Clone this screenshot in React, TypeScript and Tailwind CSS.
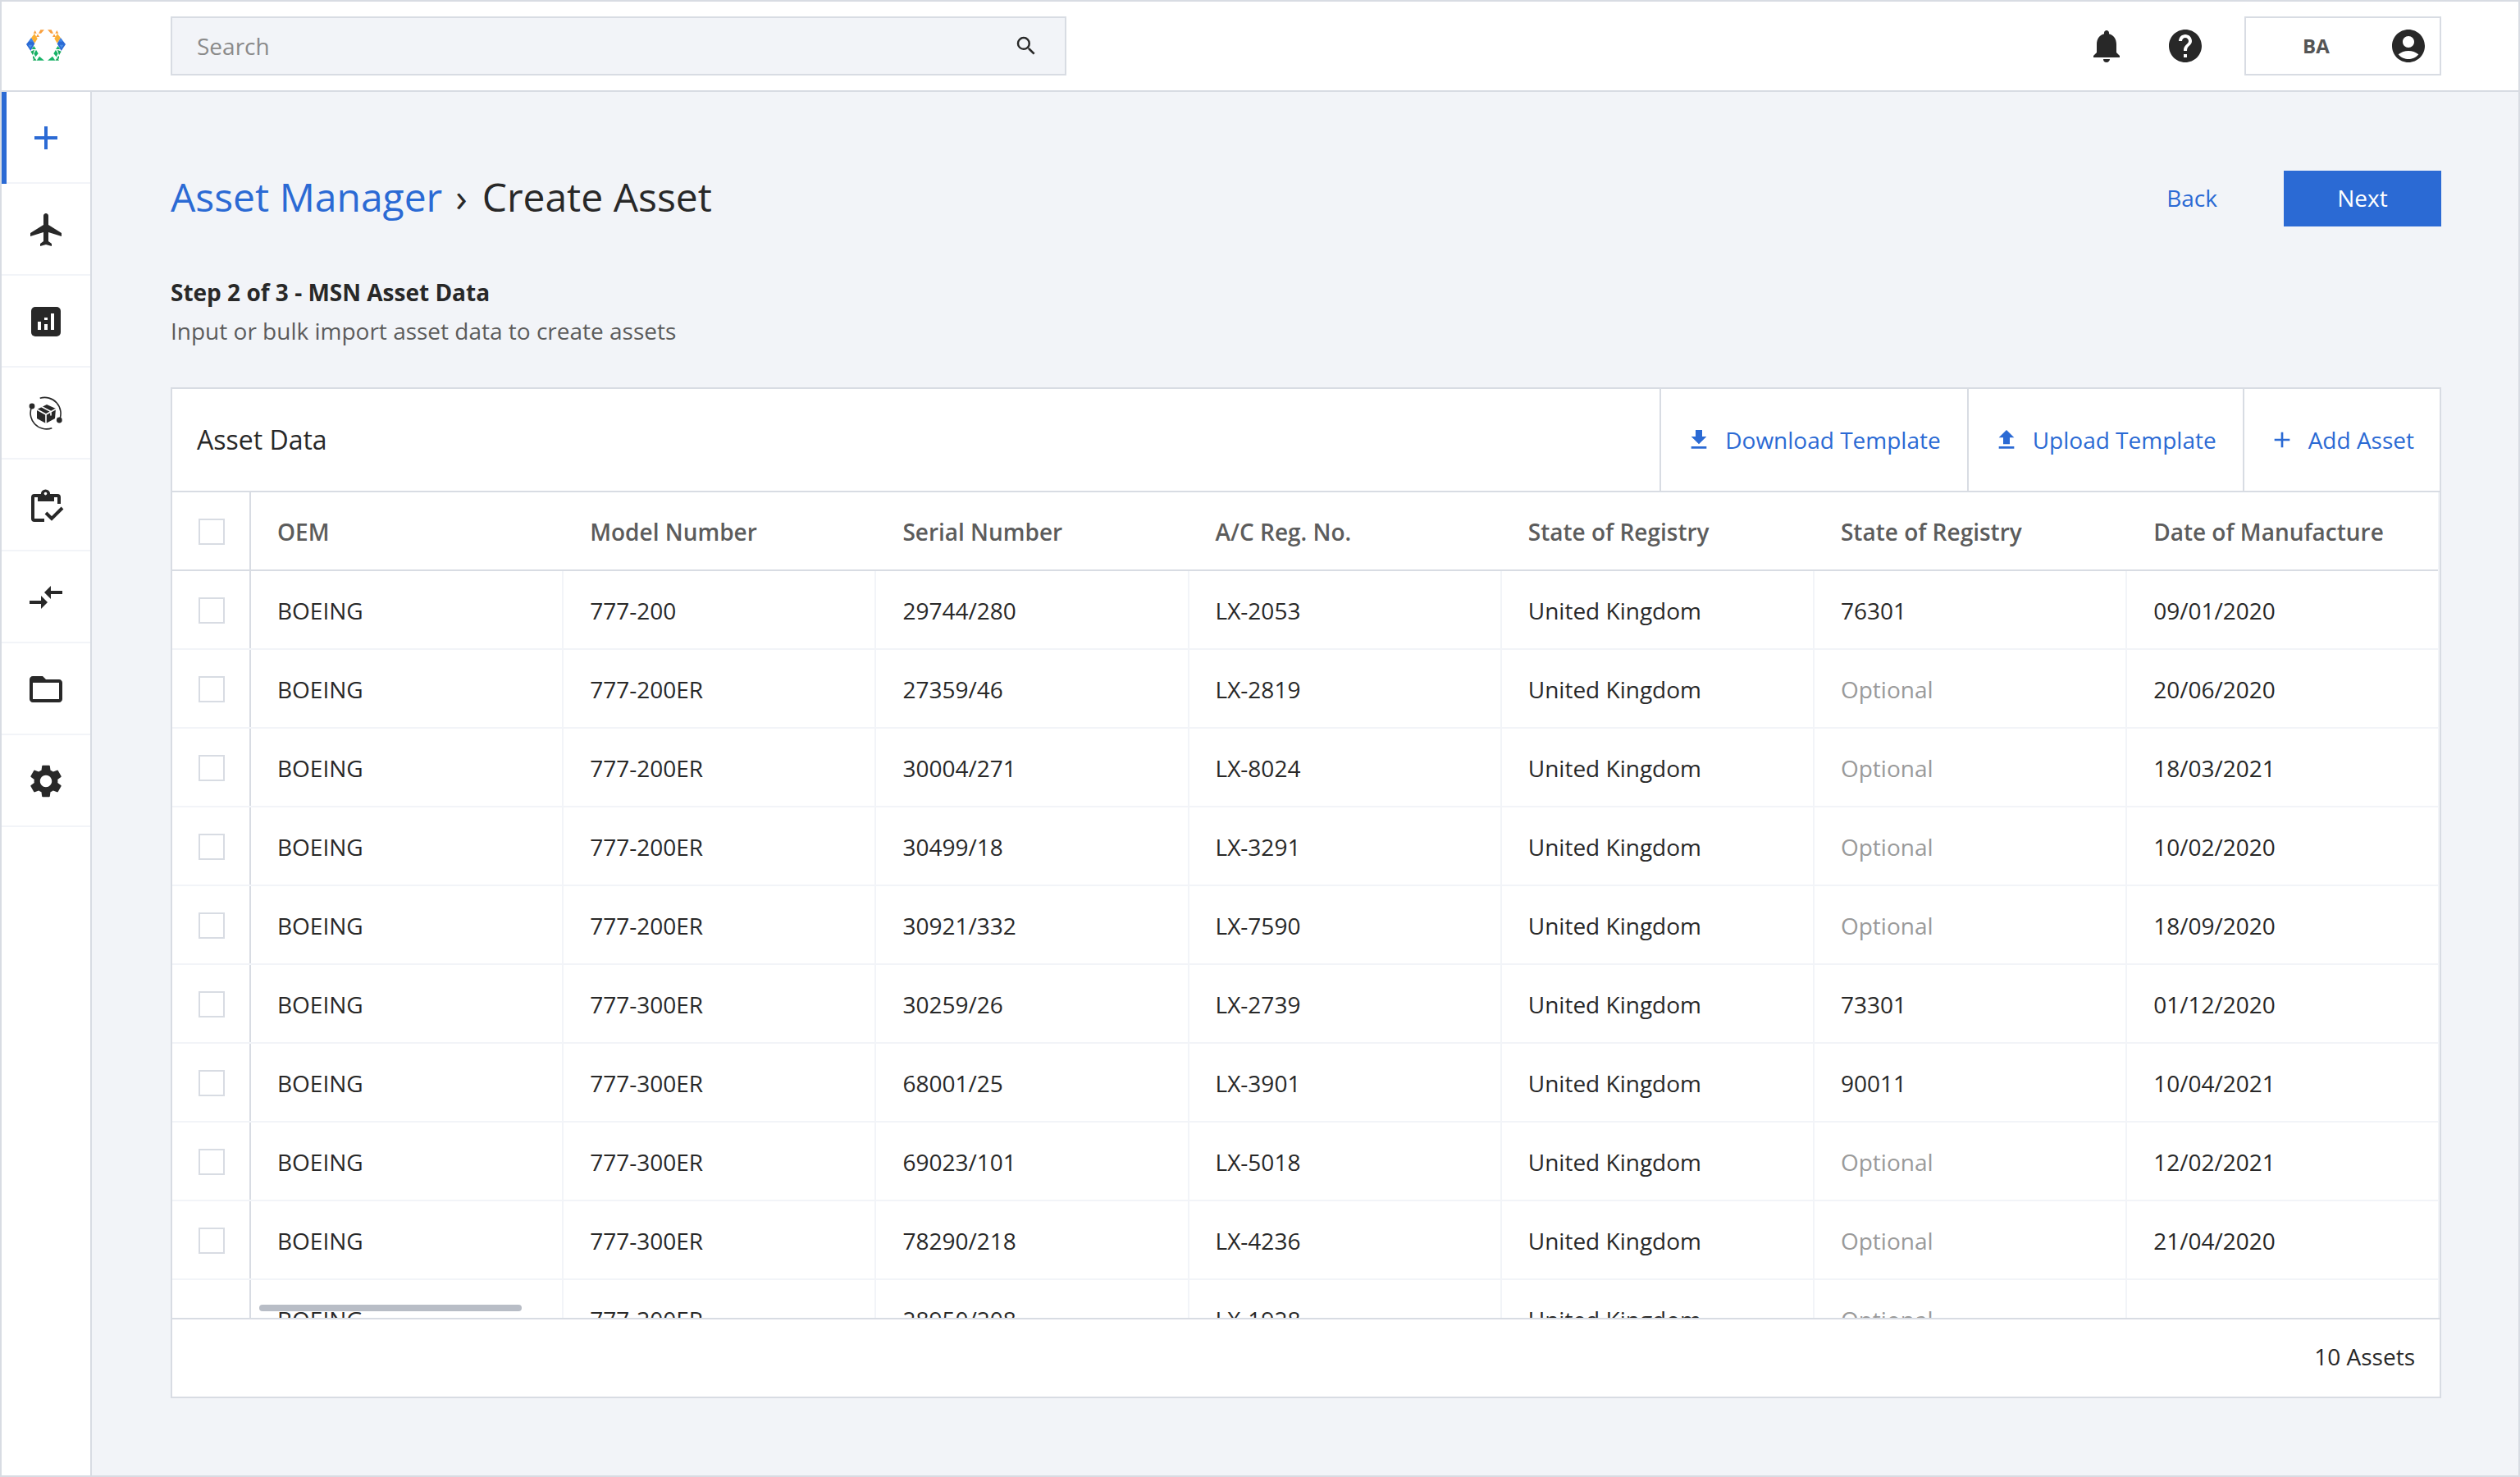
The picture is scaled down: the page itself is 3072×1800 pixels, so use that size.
import {
  MdAccountCircle,
  MdAdd,
  MdCompareArrows,
  MdFileDownload,
  MdFileUpload,
  MdFlight,
  MdFolderOpen,
  MdHelp,
  MdNotifications,
  MdSearch,
  MdSettings,
} from "react-icons/md";

const rows = [
  ["777-200", "29744/280", "LX-2053", "76301", "09/01/2020"],
  ["777-200ER", "27359/46", "LX-2819", "Optional", "20/06/2020"],
  ["777-200ER", "30004/271", "LX-8024", "Optional", "18/03/2021"],
  ["777-200ER", "30499/18", "LX-3291", "Optional", "10/02/2020"],
  ["777-200ER", "30921/332", "LX-7590", "Optional", "18/09/2020"],
  ["777-300ER", "30259/26", "LX-2739", "73301", "01/12/2020"],
  ["777-300ER", "68001/25", "LX-3901", "90011", "10/04/2021"],
  ["777-300ER", "69023/101", "LX-5018", "Optional", "12/02/2021"],
  ["777-300ER", "78290/218", "LX-4236", "Optional", "21/04/2020"],
  ["777-300ER", "28950/208", "LX-1928", "Optional", ""],
];

const headers = [
  "OEM",
  "Model Number",
  "Serial Number",
  "A/C Reg. No.",
  "State of Registry",
  "State of Registry",
  "Date of Manufacture",
];

const Logo = () => {
  const half = (
    <>
      <polygon points="52,1 66,1 54,14 45,14" fill="#f9a03f" />
      <polygon points="32,3 26,14 38,14" fill="#f9a03f" />
      <polygon points="42,16 36,27 48,27" fill="#f9a03f" />
      <polygon points="30,15 41,33 31,50 18,31" fill="#fbb034" />
      <polygon points="18,31 31,52 16,78 0,54" fill="#2b6ad4" />
      <polygon points="18,31 26,44 10,44" fill="#3f86e8" />
      <polygon points="8,56 22,56 15,68" fill="#4a8fe6" />
      <polygon points="28,60 36,72 20,72" fill="#18b368" />
      <polygon points="16,80 30,74 24,94" fill="#18a85c" />
      <polygon points="36,74 44,88 34,100 28,88" fill="#18b368" />
      <polygon points="24,96 32,102 24,108" fill="#18b368" />
      <polygon points="48,98 66,113 38,113" fill="#18b368" />
      <polygon points="30,103 38,113 24,113" fill="#18a85c" />
    </>
  );
  return (
    <svg width="48" height="38" viewBox="0 0 144 114">
      {half}
      <g transform="translate(144,0) scale(-1,1)">{half}</g>
    </svg>
  );
};

const ChartIcon = () => (
  <svg width="36" height="36" viewBox="0 0 36 36">
    <rect width="36" height="36" rx="5" fill="#282828" />
    <rect x="8" y="18" width="4" height="10" fill="#fff" />
    <rect x="16" y="13" width="4" height="3" fill="#fff" />
    <rect x="16" y="21" width="4" height="7" fill="#fff" />
    <rect x="24" y="8" width="4" height="20" fill="#fff" />
  </svg>
);

const BoxIcon = () => (
  <svg width="44" height="44" viewBox="0 0 44 44" fill="none">
    <path d="M14.7 3.3A19.5 19.5 0 0 1 38.3 30" stroke="#282828" strokeWidth="1.6" />
    <path d="M5 13A19.5 19.5 0 0 0 29.3 39.7" stroke="#282828" strokeWidth="1.6" />
    <circle cx="5" cy="13" r="3.4" fill="#282828" />
    <circle cx="38.3" cy="30" r="3.4" fill="#282828" />
    <polygon points="23,11 34,16 33,28 22,34 11,28 11,17" fill="#282828" />
    <path d="M10 16.5 22 23 34 16.5M22 23V35M16.5 13.5 28 19.5V24.5" stroke="#fff" strokeWidth="1.6" />
  </svg>
);

const ClipboardIcon = () => (
  <svg width="40" height="40" viewBox="0 0 40 40" fill="none">
    <path
      d="M34 18V10a2 2 0 0 0-2-2H4a2 2 0 0 0-2 2v26a2 2 0 0 0 2 2h12"
      stroke="#282828"
      strokeWidth="4"
    />
    <rect x="8" y="8" width="20" height="7" fill="#282828" />
    <circle cx="17.5" cy="6" r="5.6" fill="#282828" />
    <circle cx="17.5" cy="5.6" r="1.8" fill="#fff" />
    <path d="M18 29l7 7 13-13" stroke="#282828" strokeWidth="4" />
  </svg>
);

const navItems = [
  <div className="pl-[2px]"><MdFlight size={48} color="#282828" /></div>,
  <ChartIcon />,
  <BoxIcon />,
  <div className="pl-[4px]"><ClipboardIcon /></div>,
  <MdCompareArrows size={48} color="#282828" />,
  <MdFolderOpen size={48} color="#282828" />,
  <MdSettings size={48} color="#282828" />,
];

const Checkbox = () => <div className="w-8 h-8 border-2 border-[#d8dce3] bg-white" />;

export default function App() {
  return (
    <div className="w-[3072px] h-[1800px] flex flex-col border-2 border-[#d8dce3] bg-[#f2f4f8] text-[28px] text-[#282828] font-['Open_Sans',sans-serif] overflow-hidden">
      {/* Top bar */}
      <header className="h-[110px] shrink-0 flex items-center bg-white border-b-2 border-[#d8dce3] pr-[94px]">
        <div className="w-[206px] pl-[30px] pb-[2px] flex items-center">
          <Logo />
        </div>
        <div className="w-[1092px] h-[72px] flex items-center justify-between bg-[#f2f4f8] border-2 border-[#d8dce3] pl-[30px] pr-[32px] text-[#8a8a8a]">
          <span>Search</span>
          <MdSearch size={30} color="#282828" />
        </div>
        <div className="ml-auto flex items-center">
          <MdNotifications size={48} color="#282828" />
          <div className="ml-[48px]">
            <MdHelp size={48} color="#282828" />
          </div>
          <div className="ml-[48px] w-[240px] h-[72px] flex items-center border-2 border-[#d8dce3] pl-[69px] pr-[14px] justify-between">
            <span className="text-[24px] font-bold text-[#555555]">BA</span>
            <MdAccountCircle size={48} color="#282828" />
          </div>
        </div>
      </header>

      <div className="flex-1 flex min-h-0">
        {/* Sidebar */}
        <nav className="w-[110px] shrink-0 bg-white border-r-2 border-[#d8dce3]">
          <div className="h-[112px] border-l-[6px] border-[#2b6ad4]">
            <div className="h-full flex items-center justify-center border-b-2 border-[#f2f4f8] pt-[2px] pr-[6px]">
              <MdAdd size={48} color="#2b6ad4" />
            </div>
          </div>
          {navItems.map((icon, i) => (
            <div key={i} className="h-[112px] flex items-center justify-center border-b-2 border-[#f2f4f8] pt-[2px]">
              {icon}
            </div>
          ))}
        </nav>

        {/* Content */}
        <main className="flex-1 min-w-0 pl-[96px] pr-[94px] pt-[96px]">
          <div className="h-[68px] flex items-center justify-between">
            <h1 className="text-[48px] leading-[68px] pb-[4px]">
              <span className="text-[#2b6ad4]">Asset Manager</span>
              <span className="ml-[16px] mr-[18px]">›</span>
              <span>Create Asset</span>
            </h1>
            <div className="flex items-center">
              <button className="text-[#2b6ad4] mr-[81px] pb-[2px]">Back</button>
              <button className="w-[192px] h-[68px] bg-[#2b6ad4] text-white pb-[2px]">Next</button>
            </div>
          </div>

          <p className="mt-[56px] leading-[48px] font-bold">Step 2 of 3 - MSN Asset Data</p>
          <p className="leading-[48px] text-[#5c5c5c] -mt-[1px]">Input or bulk import asset data to create assets</p>

          <section className="mt-[45px] h-[1232px] flex flex-col bg-white border-2 border-[#d8dce3]">
            <div className="h-[126px] shrink-0 flex items-center border-b-2 border-[#d8dce3]">
              <h2 className="flex-1 pl-[30px] text-[32px]">Asset Data</h2>
              <button className="h-full flex items-center gap-[16px] pl-[30px] pr-[32px] border-l-2 border-[#d8dce3] text-[#2b6ad4]">
                <MdFileDownload size={32} />
                <span>Download Template</span>
              </button>
              <button className="h-full flex items-center gap-[16px] pl-[30px] pr-[32px] border-l-2 border-[#d8dce3] text-[#2b6ad4]">
                <MdFileUpload size={32} />
                <span>Upload Template</span>
              </button>
              <button className="h-full flex items-center gap-[16px] pl-[30px] pr-[31px] border-l-2 border-[#d8dce3] text-[#2b6ad4]">
                <MdAdd size={32} />
                <span>Add Asset</span>
              </button>
            </div>

            <div className="relative h-[1006px] shrink-0 overflow-hidden border-r-2 border-[#f2f4f8]">
              <div className="flex h-[96px] border-b-2 border-[#d8dce3] font-semibold text-[#5c5c5c]">
                <div className="w-[96px] shrink-0 flex items-center justify-center border-r-2 border-[#d8dce3] pl-[2px] pt-[2px]">
                  <Checkbox />
                </div>
                {headers.map((h, i) => (
                  <div key={i} className="w-[381.2px] shrink-0 flex items-center pl-[32px] pt-[2px]">
                    {h}
                  </div>
                ))}
              </div>

              {rows.map((row, i) => {
                const cells = ["BOEING", row[0], row[1], row[2], "United Kingdom", row[3], row[4]];
                return (
                  <div key={i} className="flex h-[96px] border-b-2 border-[#f2f4f8]">
                    <div className="w-[96px] shrink-0 flex items-center justify-center border-r-2 border-[#d8dce3] pl-[2px] pt-[2px]">
                      {i < 9 && <Checkbox />}
                    </div>
                    {cells.map((c, j) => (
                      <div
                        key={j}
                        className={`w-[381.2px] shrink-0 flex items-center pl-[32px] pt-[2px] ${
                          j < 6 ? "border-r-2 border-[#f2f4f8]" : ""
                        } ${c === "Optional" ? "text-[#9a9a9a]" : ""}`}
                      >
                        {c}
                      </div>
                    ))}
                  </div>
                );
              })}

              {/* Horizontal scroll thumb */}
              <div className="absolute left-[106px] top-[990px] w-[320px] h-[8px] rounded-full bg-[#b8bdc6]" />
            </div>

            <div className="flex-1 flex items-center justify-end pr-[30px] pb-[4px] border-t-2 border-[#d8dce3]">
              10 Assets
            </div>
          </section>
        </main>
      </div>
    </div>
  );
}
